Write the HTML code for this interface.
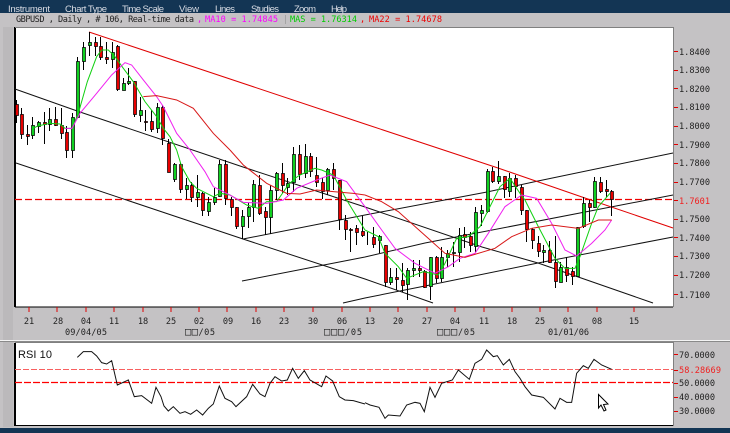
<!DOCTYPE html>
<html><head><meta charset="utf-8"><style>
html,body{margin:0;padding:0;background:#c4c2c4;width:730px;height:433px;overflow:hidden}
svg{display:block}
text{font-family:"DejaVu Sans","Liberation Sans",sans-serif;font-size:9px}
.m{fill:#d8dce4;font-family:"Liberation Sans",sans-serif;font-size:9.5px}
.t{font-family:"DejaVu Sans Mono","Liberation Mono",monospace;font-size:8.6px;fill:#222}
.b{font-size:10.5px}
</style></head><body>
<svg width="730" height="433" viewBox="0 0 730 433" xmlns="http://www.w3.org/2000/svg">
<rect width="730" height="433" fill="#c4c2c4"/>
<rect x="3" y="27" width="10" height="400" fill="#bbb9bb"/>
<rect width="730" height="13" fill="#133554"/>
<rect y="428" width="730" height="5" fill="#133554"/>
<g class="mm">
<text class="m" x="8" y="12" textLength="42">Instrument</text>
<text class="m" x="65" y="12" textLength="42">Chart Type</text>
<text class="m" x="122" y="12" textLength="42">Time Scale</text>
<text class="m" x="179" y="12" textLength="20">View</text>
<text class="m" x="215" y="12" textLength="20">Lines</text>
<text class="m" x="251" y="12" textLength="28">Studies</text>
<text class="m" x="294" y="12" textLength="22">Zoom</text>
<text class="m" x="331" y="12" textLength="16">Help</text>
</g>
<text class="t" x="16" y="22" textLength="178">GBPUSD , Daily , # 106, Real-time data</text>
<text class="t" x="197" y="22" fill="#f0f" style="fill:#f0f">,</text>
<text class="t" x="205" y="22" textLength="73" style="fill:#f0f">MA10 = 1.74845</text>
<text class="t" x="283" y="22" style="fill:#999">|</text>
<text class="t" x="290" y="22" textLength="67" style="fill:#0c0">MAS = 1.76314</text>
<text class="t" x="360" y="22" style="fill:#e00">,</text>
<text class="t" x="369" y="22" textLength="73" style="fill:#e00">MA22 = 1.74678</text>

<rect x="15" y="27" width="658" height="280" fill="#fff"/>
<rect x="15" y="343" width="658" height="83" fill="#fff"/>
<path d="M14.5 27V307M15.5 27V307M14.5 343V426M15.5 343V426" stroke="#000" fill="none"/>
<path d="M15 27.5H673.5V307M15 342.5H673.5V426" stroke="#808080" fill="none"/>
<path d="M15 307H673M15 425.5H673" stroke="#000" fill="none" stroke-width="1"/>
<path d="M0 340.5H730" stroke="#f4f4f4"/>
<path d="M0 341.5H730" stroke="#8a8a8a"/>

<path d="M15 199.5H673" stroke="#f00000" stroke-width="1.2" stroke-dasharray="7 3" fill="none"/>
<path d="M15 369.5H673" stroke="#f86060" stroke-dasharray="6 2" fill="none"/>
<path d="M15 382.5H673" stroke="#ff0000" stroke-width="1.2" stroke-dasharray="7 2" fill="none"/>

<g fill="none" stroke="#111" stroke-width="1">
<path d="M15 89L80 112L243 167L365 207L482 247L538 263L653 303"/>
<path d="M16 163L243 239L365 279L433 303"/>
<path d="M243 239L365 215L487 192L538 181L673 153"/>
<path d="M242 281L365 257L425 243L673 195"/>
<path d="M343 303L365 298L430 285L538 263L673 237"/>
</g>
<path d="M89 32L365 124L498 168L582 197L673 228" fill="none" stroke="#e00000" stroke-width="1"/>

<path fill="none" stroke="#000" d="M16.5 100V123M21.5 108V139M27.5 125V145M32.5 117V139M38.5 121V133M44.5 112V144M49.5 108V131M55.5 107V126M61.5 108V139M66.5 126V158M72.5 113V158M77.5 57V118M83.5 42V70M89.5 32V56M95.5 37V56M100.5 37V60M106.5 42V64M112.5 42V68M117.5 45V91M123.5 78V90M128.5 68V85M134.5 81V117M140.5 97V122M145.5 110V131M151.5 110V132M157.5 103V133M162.5 105V145M168.5 139V172M174.5 163V182M180.5 163V193M186.5 178V199M191.5 182V202M197.5 175V207M202.5 192V216M208.5 197V216M214.5 188V205M219.5 160V197M225.5 160V205M231.5 197V216M236.5 207V229M242.5 210V239M248.5 203V228M253.5 180V222M259.5 175V215M265.5 207V235M270.5 185V234M276.5 172V200M282.5 163V193M287.5 178V195M293.5 147V192M299.5 145V180M305.5 144V178M310.5 153V177M316.5 157V187M322.5 178V199M327.5 168V195M333.5 163V190M339.5 180V230M345.5 215V240M350.5 228V252M356.5 225V245M362.5 216V237M367.5 232V245M373.5 227V248M379.5 235V253M385.5 245V287M390.5 268V285M396.5 268V290M402.5 263V292M407.5 268V300M413.5 260V277M419.5 260V277M424.5 270V288M430.5 257V300M436.5 256V283M441.5 247V282M447.5 250V267M453.5 242V267M459.5 228V262M464.5 227V248M470.5 232V252M475.5 207V252M481.5 205V226M487.5 169V213M492.5 167V183M498.5 161V184M504.5 176V198M509.5 173V197M515.5 175V198M521.5 185V215M526.5 210V242M532.5 228V249M538.5 236V257M543.5 245V263M549.5 241V263M555.5 236V288M560.5 262V282M566.5 257V282M572.5 267V285M577.5 227V276M583.5 197V228M589.5 200V222M594.5 177V208M600.5 177V193M606.5 180V197M611.5 190V216"/>

<path fill="#e80000" stroke="#000" stroke-width=".7" d="M15.5 104.5h3v11h-3zM20.5 114.5h3v20h-3zM26.5 134.5h3v2h-3zM43.5 122.5h3v2h-3zM54.5 119.5h3v6h-3zM60.5 125.5h3v8h-3zM65.5 132.5h3v18h-3zM94.5 42.5h3v4h-3zM99.5 46.5h3v11h-3zM105.5 57.5h3v2h-3zM116.5 46.5h3v43h-3zM133.5 81.5h3v33h-3zM144.5 121.5h3v1h-3zM150.5 121.5h3v8h-3zM161.5 107.5h3v31h-3zM167.5 143.5h3v29h-3zM179.5 164.5h3v25h-3zM190.5 185.5h3v12h-3zM201.5 193.5h3v17h-3zM224.5 164.5h3v34h-3zM230.5 199.5h3v8h-3zM235.5 207.5h3v19h-3zM258.5 185.5h3v28h-3zM264.5 211.5h3v6h-3zM281.5 173.5h3v12h-3zM298.5 154.5h3v20h-3zM309.5 156.5h3v15h-3zM315.5 175.5h3v7h-3zM321.5 182.5h3v9h-3zM332.5 169.5h3v9h-3zM338.5 180.5h3v39h-3zM344.5 220.5h3v9h-3zM349.5 229.5h3v1h-3zM355.5 228.5h3v4h-3zM361.5 231.5h3v4h-3zM372.5 237.5h3v7h-3zM384.5 245.5h3v37h-3zM395.5 277.5h3v2h-3zM401.5 280.5h3v5h-3zM418.5 268.5h3v2h-3zM423.5 271.5h3v16h-3zM435.5 257.5h3v21h-3zM463.5 234.5h3v3h-3zM469.5 236.5h3v9h-3zM491.5 171.5h3v10h-3zM503.5 176.5h3v13h-3zM514.5 178.5h3v8h-3zM520.5 187.5h3v23h-3zM525.5 210.5h3v19h-3zM531.5 229.5h3v11h-3zM537.5 243.5h3v8h-3zM548.5 250.5h3v12h-3zM554.5 262.5h3v19h-3zM565.5 267.5h3v8h-3zM571.5 271.5h3v5h-3zM588.5 203.5h3v4h-3zM599.5 182.5h3v9h-3zM605.5 189.5h3v2h-3zM610.5 191.5h3v8h-3z"/>

<path fill="#10d020" stroke="#000" stroke-width=".7" d="M31.5 125.5h3v10h-3zM37.5 122.5h3v4h-3zM48.5 119.5h3v5h-3zM71.5 117.5h3v33h-3zM76.5 61.5h3v56h-3zM82.5 47.5h3v14h-3zM88.5 42.5h3v3h-3zM111.5 52.5h3v7h-3zM122.5 83.5h3v7h-3zM127.5 81.5h3v2h-3zM139.5 110.5h3v5h-3zM156.5 107.5h3v21h-3zM173.5 164.5h3v15h-3zM185.5 185.5h3v4h-3zM196.5 192.5h3v5h-3zM207.5 202.5h3v9h-3zM213.5 197.5h3v5h-3zM218.5 164.5h3v32h-3zM241.5 216.5h3v10h-3zM247.5 207.5h3v9h-3zM252.5 184.5h3v23h-3zM269.5 190.5h3v27h-3zM275.5 173.5h3v17h-3zM286.5 183.5h3v4h-3zM292.5 154.5h3v28h-3zM304.5 156.5h3v17h-3zM326.5 169.5h3v21h-3zM378.5 236.5h3v4h-3zM389.5 277.5h3v5h-3zM406.5 270.5h3v14h-3zM412.5 268.5h3v2h-3zM429.5 257.5h3v29h-3zM440.5 257.5h3v21h-3zM446.5 253.5h3v4h-3zM452.5 252.5h3v1h-3zM458.5 235.5h3v17h-3zM474.5 212.5h3v34h-3zM480.5 210.5h3v3h-3zM486.5 171.5h3v40h-3zM497.5 176.5h3v5h-3zM508.5 178.5h3v13h-3zM542.5 250.5h3v2h-3zM559.5 267.5h3v15h-3zM576.5 227.5h3v49h-3zM582.5 203.5h3v23h-3zM593.5 181.5h3v26h-3z"/>

<!-- fast MA green -->
<g fill="none" stroke="#10d010" stroke-width="3">
<polyline transform="scale(.3333)" points="100,385 113,378 150,370 180,372 195,385 216,385 235,340 262,245 290,170 305,150 325,150 345,170 370,205 400,245 435,305 470,350 490,385 510,410 530,450"/>
<polyline transform="translate(0,150) scale(.3333)" points="530,0 545,50 570,95 590,115 640,140 660,130 690,135 740,165 775,175 800,155 830,155 865,105 885,85 900,75 945,55 965,60 1000,75 1040,150 1095,240"/>
<polyline transform="translate(365,150) scale(.3333)" points="0,240 40,260 60,310 100,350 125,385 175,365 220,375 240,340 275,265 310,260 345,230 375,170 405,110 435,85 465,130 480,150 520,230 570,325 600,355 630,355 645,320 680,220 700,170 735,130"/>
</g>
<!-- magenta -->
<g fill="none" stroke="#f020f0" stroke-width="3">
<polyline transform="scale(.3333)" points="195,385 216,385 240,340 290,280 335,225 375,188 395,195 430,240 470,290 490,320 530,400 570,450"/>
<polyline transform="translate(0,150) scale(.3333)" points="570,0 615,65 640,110 680,130 730,157 800,160 850,150 890,115 950,90 990,75 1040,95 1095,170"/>
<polyline transform="translate(365,150) scale(.3333)" points="0,170 50,240 90,295 150,340 210,370 250,350 285,325 330,310 370,250 420,170 470,135 515,145 560,220 600,300 635,318 680,280 720,240 740,210"/>
</g>
<!-- slow red -->
<g fill="none" stroke="#d81818" stroke-width="3">
<polyline transform="scale(.3333)" points="430,290 470,287 530,300 580,325 640,400 690,450"/>
<polyline transform="translate(0,150) scale(.3333)" points="690,0 730,45 800,100 860,130 900,132 950,120 1000,125 1060,130 1095,135"/>
<polyline transform="translate(365,150) scale(.3333)" points="0,135 50,155 100,185 190,265 240,310 300,322 390,295 440,260 500,235 560,225 640,235 700,210 740,210"/>
</g>
<!-- RSI -->
<g fill="none" stroke="#111" stroke-width="3">
<polyline transform="translate(0,300) scale(.3333)" points="232,172 250,155 275,155 290,168 305,188 320,192 335,182 345,225 352,255 385,240 403,290 425,287 455,310 468,262 483,290 492,318 505,333 520,320 540,340 555,335 572,343 590,330 608,345 625,325 640,312 658,258 675,295 695,305 708,320 740,290 758,253 780,282 795,290 810,250 825,230 845,243 862,240 878,205 895,235 913,212 930,240 965,260 978,228 998,243 1018,290 1035,300 1060,302 1095,312"/>
<polyline transform="translate(365,300) scale(.3333)" points="0,308 15,315 42,322 60,355 70,345 105,348 125,315 150,307 165,310 178,335 195,262 210,292 230,250 262,240 280,210 313,238 330,190 350,178 365,150 385,170 397,167 415,195 433,178 450,215 465,235 480,260 500,285 535,292 570,327 585,295 605,307 620,307 635,220 655,197 670,205 687,178 710,195 740,208"/>
</g>
<path d="M598.5 394.5V408L601 405L604 411L606 410L603.5 404.5L608 404Z" fill="#fff" stroke="#000"/>
<text x="18" y="358" textLength="34" style="font-family:'Liberation Sans',sans-serif;font-size:11px;fill:#111">RSI 10</text>

<!-- ticks -->
<path fill="none" stroke="#e00000" d="M29 307V312M57 307V312M86 307V312M114 307V312M143 307V312M171 307V312M199 307V312M227 307V312M256 307V312M284 307V312M313 307V312M342 307V312M370 307V312M398 307V312M427 307V312M455 307V312M484 307V312M512 307V312M540 307V312M568 307V312M597 307V312M634 307V312"/>
<path fill="none" stroke="#e00000" d="M674 51.5H678M674 70.5H678M674 88.5H678M674 107.5H678M674 126.5H678M674 144.5H678M674 163.5H678M674 182.5H678M674 200.5H678M674 219.5H678M674 237.5H678M674 256.5H678M674 275.5H678M674 294.5H678M674 354.5H678M674 370.5H678M674 383.5H678M674 397.5H678M674 411.5H678"/>

<g class="t">
<text class="t" x="679" y="55" textLength="31">1.8400</text>
<text class="t" x="679" y="73" textLength="31">1.8300</text>
<text class="t" x="679" y="92" textLength="31">1.8200</text>
<text class="t" x="679" y="110" textLength="31">1.8100</text>
<text class="t" x="679" y="129" textLength="31">1.8000</text>
<text class="t" x="679" y="148" textLength="31">1.7900</text>
<text class="t" x="679" y="166" textLength="31">1.7800</text>
<text class="t" x="679" y="185" textLength="31">1.7700</text>
<text class="t" x="679" y="204" textLength="31" style="fill:#f02020">1.7601</text>
<text class="t" x="679" y="222" textLength="31">1.7500</text>
<text class="t" x="679" y="241" textLength="31">1.7400</text>
<text class="t" x="679" y="259" textLength="31">1.7300</text>
<text class="t" x="679" y="278" textLength="31">1.7200</text>
<text class="t" x="679" y="298" textLength="31">1.7100</text>
<text class="t" x="679" y="358" textLength="36">70.0000</text>
<text class="t" x="679" y="373" textLength="42" style="fill:#f02020">58.28669</text>
<text class="t" x="679" y="386" textLength="36">50.0000</text>
<text class="t" x="679" y="400" textLength="36">40.0000</text>
<text class="t" x="679" y="414" textLength="36">30.0000</text>
</g>
<g class="t" text-anchor="middle">
<text class="t" x="29" y="324">21</text><text class="t" x="58" y="324">28</text><text class="t" x="86" y="324">04</text><text class="t" x="114" y="324">11</text><text class="t" x="143" y="324">18</text><text class="t" x="171" y="324">25</text><text class="t" x="199" y="324">02</text><text class="t" x="228" y="324">09</text><text class="t" x="256" y="324">16</text><text class="t" x="284" y="324">23</text><text class="t" x="313" y="324">30</text><text class="t" x="342" y="324">06</text><text class="t" x="370" y="324">13</text><text class="t" x="398" y="324">20</text><text class="t" x="427" y="324">27</text><text class="t" x="455" y="324">04</text><text class="t" x="484" y="324">11</text><text class="t" x="512" y="324">18</text><text class="t" x="540" y="324">25</text><text class="t" x="568" y="324">01</text><text class="t" x="597" y="324">08</text><text class="t" x="634" y="324">15</text>
</g>
<text class="t" x="65" y="335" textLength="42">09/04/05</text>
<text class="t" x="185" y="335" textLength="30"><tspan class="b">□□</tspan>/05</text>
<text class="t" x="324" y="335" textLength="38"><tspan class="b">□□□</tspan>/05</text>
<text class="t" x="437" y="335" textLength="38"><tspan class="b">□□□</tspan>/05</text>
<text class="t" x="548" y="335" textLength="41">01/01/06</text>
</svg>
</body></html>
